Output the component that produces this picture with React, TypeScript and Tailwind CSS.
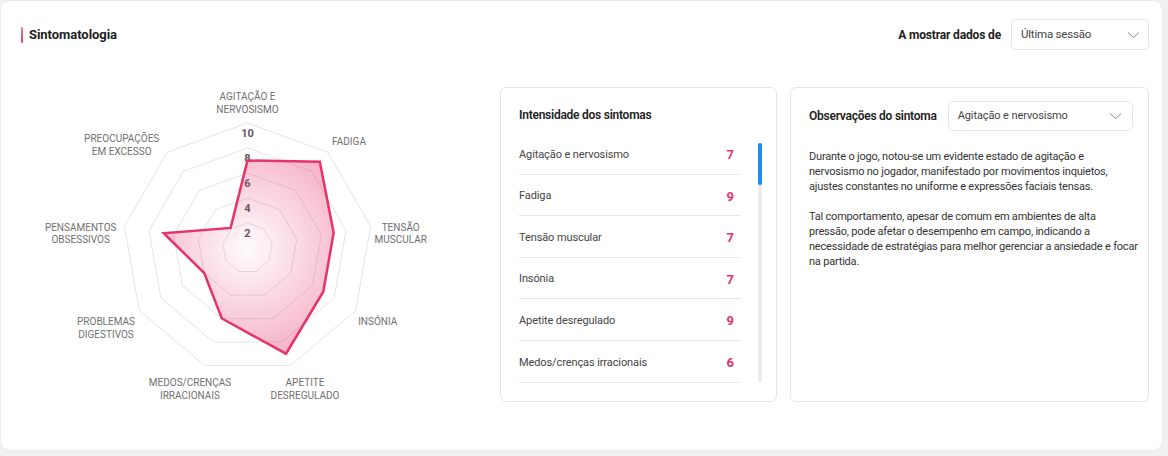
import React from 'react';

const PINK = '#e6336a';

type Axis = { label: string[]; value: number; x: number; y: number[] };

// label positions are relative to the chart svg
const axes: Axis[] = [
  { label: ['AGITAÇÃO E', 'NERVOSISMO'], value: 7, x: 226.5, y: [9, 22] },
  { label: ['FADIGA'], value: 9, x: 328, y: [54] },
  { label: ['TENSÃO', 'MUSCULAR'], value: 7, x: 379.7, y: [140, 152.5] },
  { label: ['INSÓNIA'], value: 7, x: 356.7, y: [234] },
  { label: ['APETITE', 'DESREGULADO'], value: 9, x: 284, y: [295, 308] },
  { label: ['MEDOS/CRENÇAS', 'IRRACIONAIS'], value: 6, x: 169, y: [295, 308] },
  { label: ['PROBLEMAS', 'DIGESTIVOS'], value: 4, x: 85, y: [234, 247] },
  { label: ['PENSAMENTOS', 'OBSESSIVOS'], value: 6.8, x: 59.7, y: [140, 152.5] },
  { label: ['PREOCUPAÇÕES', 'EM EXCESSO'], value: 2.1, x: 100.7, y: [51.5, 64] },
];

// only the rows visible in the scroll area
const rows = [
  { name: 'Agitação e nervosismo', value: 7 },
  { name: 'Fadiga', value: 9 },
  { name: 'Tensão muscular', value: 7 },
  { name: 'Insónia', value: 7 },
  { name: 'Apetite desregulado', value: 9 },
  { name: 'Medos/crenças irracionais', value: 6 },
];

const CX = 226.5;
const CY = 161;
const STEP = 12.5;

const point = (i: number, v: number) => {
  const a = ((-90 + 40 * i) * Math.PI) / 180;
  return [CX + Math.cos(a) * v * STEP, CY + Math.sin(a) * v * STEP];
};

const poly = (vals: number[]) => vals.map((v, i) => point(i, v).join(',')).join(' ');

const Chevron = () => (
  <svg width="13" height="8" viewBox="0 0 13 8" fill="none">
    <polyline points="1,1.5 6.5,6.5 12,1.5" stroke="#8a8a8a" strokeWidth="1" />
  </svg>
);

const Radar = () => (
  <svg width="466" height="315" className="shrink-0 overflow-visible">
    <defs>
      <radialGradient id="fill" cx={CX} cy={CY} r="125" gradientUnits="userSpaceOnUse">
        <stop offset="0" stopColor={PINK} stopOpacity="0.02" />
        <stop offset="1" stopColor={PINK} stopOpacity="0.42" />
      </radialGradient>
    </defs>
    {[2, 4, 6, 8, 10].map((l) => (
      <polygon key={l} points={poly(axes.map(() => l))} fill="none" stroke="#e4e4e4" strokeWidth="1" />
    ))}
    {[2, 4, 6, 8, 10].map((l) => (
      <text
        key={l}
        x={CX}
        y={CY - l * STEP + 10}
        textAnchor="middle"
        dominantBaseline="central"
        fontSize="11"
        fontWeight="700"
        fill="#5a5a5a"
      >
        {l}
      </text>
    ))}
    <polygon
      points={poly(axes.map((a) => a.value))}
      fill="url(#fill)"
      stroke={PINK}
      strokeWidth="2.5"
      strokeLinejoin="miter"
    />
    {axes.map((a) =>
      a.label.map((t, j) => (
        <text
          key={t}
          x={a.x}
          y={a.y[j]}
          textAnchor="middle"
          dominantBaseline="central"
          fontSize="10"
          fill="#707070"
        >
          {t}
        </text>
      ))
    )}
  </svg>
);

export default function App() {
  return (
    <div className="w-[1168px] h-[456px] bg-[#f1f1f1] pr-[5px] pb-[5px] font-['Roboto',sans-serif] text-[#333]">
      <div className="h-full w-full bg-white rounded-[10px] border border-[#ebebeb] pl-[20px] pr-[13px] pt-[18px]">
        {/* header */}
        <div className="flex h-[31px] items-center justify-between">
          <div className="flex items-center gap-[6px]">
            <span className="h-[16px] w-[2px] rounded-full bg-gradient-to-b from-[#f07a98] to-[#e6336a]" />
            <h2 className="text-[13px] font-bold tracking-[-0.05px] text-[#222]">Sintomatologia</h2>
          </div>
          <div className="flex items-center gap-[10px]">
            <span className="text-[12px] font-bold tracking-[-0.15px] text-[#222]">A mostrar dados de</span>
            <div className="flex h-[31px] w-[138px] items-center justify-between rounded-[4px] border border-[#e6e6e6] pl-[9px] pr-[8px]">
              <span className="text-[11.5px] tracking-[-0.2px] text-[#444]">Última sessão</span>
              <Chevron />
            </div>
          </div>
        </div>

        {/* content */}
        <div className="mt-[37px] flex gap-[13px]">
          <Radar />

          <div className="h-[315px] w-[277px] rounded-[6px] border border-[#e6e6e6] pl-[18px] pt-[19px]">
            <h3 className="text-[12px] font-semibold leading-[16px] tracking-[-0.25px] text-[#222]">
              Intensidade dos sintomas
            </h3>
            <div className="mt-[10px] flex gap-[17px]">
              <div className="h-[251px] w-[222px] overflow-hidden">
                {rows.map((r) => (
                  <div
                    key={r.name}
                    className="flex h-[41.6px] items-center justify-between border-b border-[#e8e8e8] pt-[3px] pr-[7px]"
                  >
                    <span className="text-[11px] tracking-[-0.1px] text-[#444]">{r.name}</span>
                    <span className="text-[13px] font-bold text-[#e6336a]">{r.value}</span>
                  </div>
                ))}
              </div>
              <div className="mt-[10px] h-[240px] w-[4px] rounded-full bg-[#ececec]">
                <div className="h-[42px] w-[4px] rounded-full bg-[#1b8cf0]" />
              </div>
            </div>
          </div>

          <div className="h-[315px] w-[359px] rounded-[6px] border border-[#e6e6e6] pl-[18px] pt-[13px]">
            <div className="flex h-[30px] items-center gap-[11px]">
              <h3 className="text-[12px] font-semibold tracking-[-0.25px] text-[#222]">Observações do sintoma</h3>
              <div className="flex h-[30px] w-[185px] items-center justify-between rounded-[5px] border border-[#e6e6e6] pl-[9px] pr-[10px]">
                <span className="text-[11px] tracking-[-0.1px] text-[#444]">Agitação e nervosismo</span>
                <Chevron />
              </div>
            </div>
            <div className="mt-[18px] whitespace-nowrap text-[11px] leading-[15px] tracking-[-0.2px] text-[#333]">
              <p>
                Durante o jogo, notou-se um evidente estado de agitação e<br />
                nervosismo no jogador, manifestado por movimentos inquietos,<br />
                ajustes constantes no uniforme e expressões faciais tensas.
              </p>
              <p className="mt-[15px]">
                Tal comportamento, apesar de comum em ambientes de alta<br />
                pressão, pode afetar o desempenho em campo, indicando a<br />
                necessidade de estratégias para melhor gerenciar a ansiedade e focar<br />
                na partida.
              </p>
            </div>
          </div>
        </div>
      </div>
    </div>
  );
}
